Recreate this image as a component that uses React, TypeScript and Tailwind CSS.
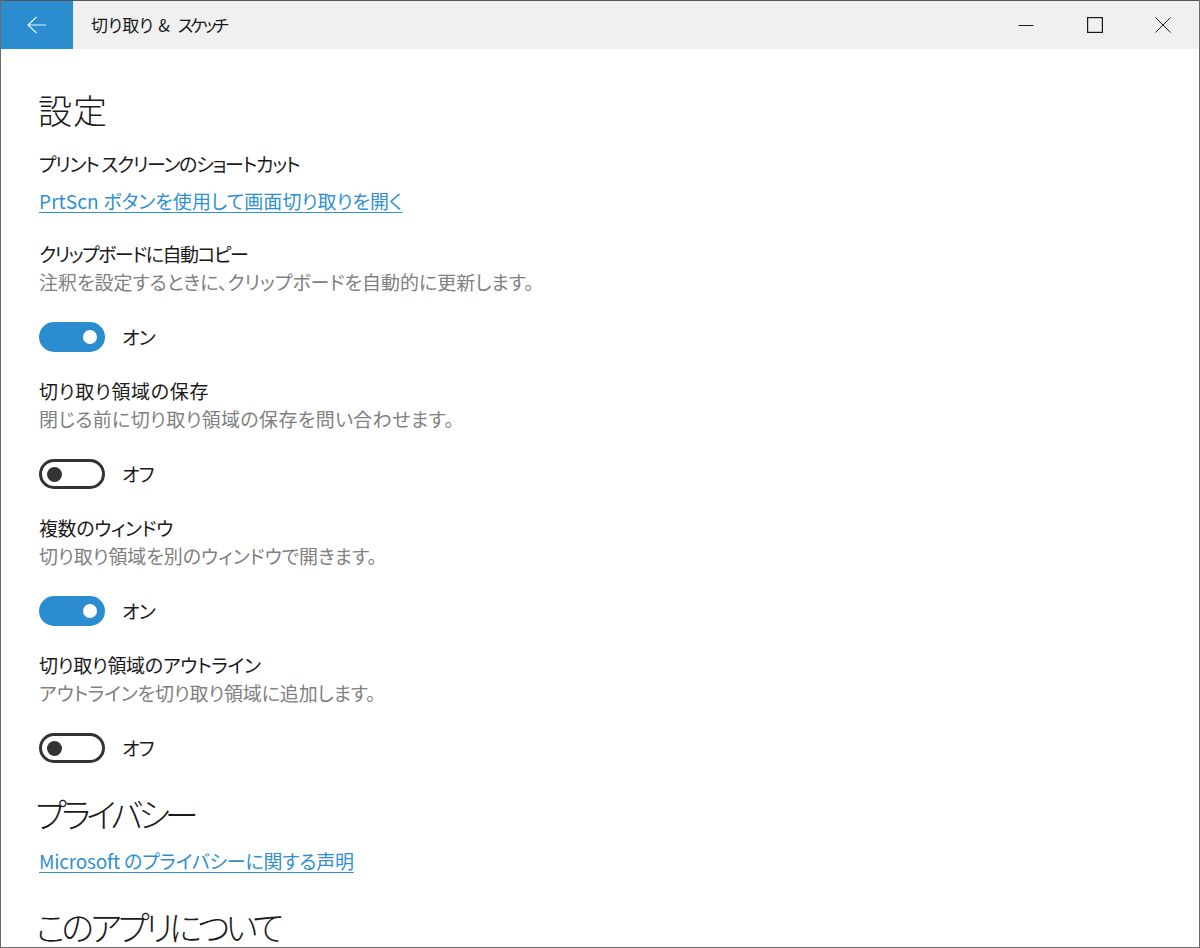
import React from 'react'

const font = "[font-family:'Noto_Sans_CJK_JP','Noto_Sans',sans-serif]"

const Toggle = ({ on }: { on: boolean }) => (
  <div className="mt-[26px] flex h-[30px] items-center">
    {on ? (
      <div className="flex h-[30px] w-[66px] items-center justify-end rounded-full bg-[#2b8dcf] pr-[8px]">
        <div className="h-[14px] w-[14px] rounded-full bg-white" />
      </div>
    ) : (
      <div className="flex h-[30px] w-[66px] items-center rounded-full border-[3px] border-[#333333] pl-[5px]">
        <div className="h-[15px] w-[15px] rounded-full bg-[#333333]" />
      </div>
    )}
    <span className="ml-[17px] text-[19px] leading-[30px] tracking-[-0.8px] text-[#1a1a1a]">{on ? 'オン' : 'オフ'}</span>
  </div>
)

const Setting = ({ title, desc, on, titleClass, descClass }: { title: string; desc: string; on: boolean; titleClass: string; descClass: string }) => (
  <div className="mt-[24px]">
    <div className={`text-[19px] leading-[29px] text-[#1a1a1a] ${titleClass}`}>{title}</div>
    <div className={`-mt-[1px] text-[19px] leading-[29px] text-[#808080] ${descClass}`}>{desc}</div>
    <Toggle on={on} />
  </div>
)

export default function App() {
  return (
    <div className={`${font} h-[948px] w-[1200px] overflow-hidden border-x border-b border-x-[#6b6b6b] border-b-[#6b6b6b] bg-white [font-feature-settings:'palt']`}>
      <div className="flex h-[49px] items-center border-t border-t-[#555555] bg-[#f0f0f0]">
        <div className="flex h-full w-[72px] items-center justify-center bg-[#2b8dcf]">
          <svg width="20" height="18" viewBox="0 0 20 18" fill="none" stroke="#e6f2fa" strokeWidth="1.2">
            <path d="M1 9H19M9.5 1L1 9L9.5 17" />
          </svg>
        </div>
        <div className="ml-[18px] flex items-baseline text-[17px] text-[#1a1a1a]">
          <span>切り取り</span>
          <span className="ml-[5px]">&amp;</span>
          <span className="ml-[8px] tracking-[-3px]">スケッチ</span>
        </div>
        <div className="ml-auto flex items-center">
          <svg className="mr-[53px]" width="16" height="16" viewBox="0 0 16 16" fill="none" stroke="#1a1a1a" strokeWidth="1">
            <path d="M0.5 8.5H15.5" />
          </svg>
          <svg className="mr-[52px]" width="16" height="16" viewBox="0 0 16 16" fill="none" stroke="#1a1a1a" strokeWidth="1.2">
            <rect x="0.6" y="0.6" width="14.8" height="14.8" />
          </svg>
          <svg className="mr-[28px]" width="16" height="16" viewBox="0 0 16 16" fill="none" stroke="#1a1a1a" strokeWidth="1">
            <path d="M0.5 0.5L15.5 15.5M15.5 0.5L0.5 15.5" />
          </svg>
        </div>
      </div>
      <div className="pl-[38px]">
        <h1 className="mt-[37px] -ml-[1px] text-[34px] leading-[48px] font-light tracking-[1px] text-[#1a1a1a]">設定</h1>
        <div className="mt-[15px] text-[19px] leading-[29px] tracking-[-1.3px] text-[#1a1a1a]">プリント スクリーンのショートカット</div>
        <a className="mt-[8px] block text-[19px] leading-[29px] tracking-[0.1px] text-[#2f90d1] underline decoration-1 underline-offset-[3px]">PrtScn ボタンを使用して画面切り取りを開く</a>
        <Setting title="クリップボードに自動コピー" desc="注釈を設定するときに、クリップボードを自動的に更新します。" on titleClass="tracking-[-1.5px]" descClass="tracking-[0px]" />
        <Setting title="切り取り領域の保存" desc="閉じる前に切り取り領域の保存を問い合わせます。" on={false} titleClass="tracking-[0.7px]" descClass="tracking-[0.35px]" />
        <Setting title="複数のウィンドウ" desc="切り取り領域を別のウィンドウで開きます。" on titleClass="tracking-[-0.4px]" descClass="tracking-[-0.05px]" />
        <Setting title="切り取り領域のアウトライン" desc="アウトラインを切り取り領域に追加します。" on={false} titleClass="tracking-[-0.3px]" descClass="tracking-[-0.15px]" />
        <h2 className="mt-[27px] -ml-[4px] text-[34px] leading-[48px] font-light tracking-[-4.7px] text-[#1a1a1a]">プライバシー</h2>
        <a className="mt-[8px] block text-[19px] leading-[29px] tracking-[-0.2px] text-[#2f90d1] underline decoration-1 underline-offset-[3px]">Microsoft のプライバシーに関する声明</a>
        <h2 className="mt-[33px] -ml-[3px] text-[34px] leading-[38px] font-light tracking-[-4px] text-[#1a1a1a]">このアプリについて</h2>
      </div>
    </div>
  )
}
